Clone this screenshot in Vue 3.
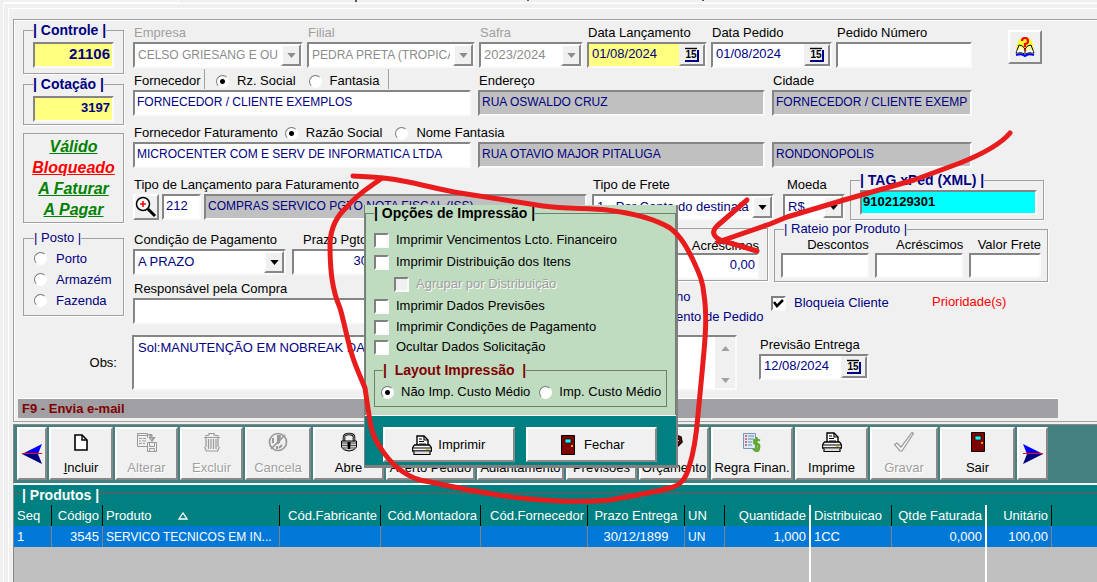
<script setup>
import { ref } from 'vue'

const posto = ref('')
const supplierName = ref('rz')
const billingName = ref('razao')
const layout = ref('nao')
const notes = ref('Sol:MANUTENÇÃO EM NOBREAK DA')

const statuses = [
  { text: 'Válido', tone: 'ok' },
  { text: 'Bloqueado', tone: 'bad' },
  { text: 'A Faturar', tone: 'ok' },
  { text: 'A Pagar', tone: 'ok' }
]

const postos = ['Porto', 'Armazém', 'Fazenda']
const rateio = ['Descontos', 'Acréscimos', 'Valor Frete']

const actions = [
  { text: 'Incluir', icon: 'page', key: true },
  { text: 'Alterar', icon: 'edit', off: true },
  { text: 'Excluir', icon: 'trash', off: true },
  { text: 'Cancela', icon: 'cancel', off: true },
  { text: 'Abre', icon: 'lock' },
  { text: 'Acerto Pedido', icon: '' },
  { text: 'Adiantamento', icon: '' },
  { text: 'Previsões', icon: '' },
  { text: 'Orçamento', icon: 'book' },
  { text: 'Regra Finan.', icon: 'rule' },
  { text: 'Imprime', icon: 'printer' },
  { text: 'Gravar', icon: 'check', off: true },
  { text: 'Sair', icon: 'door' }
]

const options = [
  { id: 'venc', text: 'Imprimir Vencimentos Lcto. Financeiro' },
  { id: 'dist', text: 'Imprimir Distribuição dos Itens' },
  { id: 'agr', text: 'Agrupar por Distribuição', off: true },
  { id: 'prev', text: 'Imprimir Dados Previsões' },
  { id: 'cond', text: 'Imprimir Condições de Pagamento' },
  { id: 'ocul', text: 'Ocultar Dados Solicitação' }
]

const columns = [
  { name: 'Seq', value: '1', cls: 'w-seq' },
  { name: 'Código', value: '3545', cls: 'w-cod right' },
  { name: 'Produto', value: 'SERVICO TECNICOS EM IN...', cls: 'w-prod caps', sorted: true },
  { name: 'Cód.Fabricante', value: '', cls: 'w-fab' },
  { name: 'Cód.Montadora', value: '', cls: 'w-mon' },
  { name: 'Cód.Fornecedor', value: '', cls: 'w-for' },
  { name: 'Prazo Entrega', value: '30/12/1899', cls: 'w-pra center' },
  { name: 'UN', value: 'UN', cls: 'w-un caps' },
  { name: 'Quantidade', value: '1,000', cls: 'w-qtd right split' },
  { name: 'Distribuicao', value: '1CC', cls: 'w-dis' },
  { name: 'Qtde Faturada', value: '0,000', cls: 'w-fat right split' },
  { name: 'Unitário', value: '100,00', cls: 'w-uni right' },
  { name: '', value: '', cls: 'w-rest' }
]
</script>

<template>
  <svg class="defs" aria-hidden="true">
    <symbol id="i-page" viewBox="0 0 20 20"><path d="M4 3h7l5 5v10H4z" fill="#fff" stroke="#000" stroke-width="1.6" /><path d="M11 3v5h5" fill="none" stroke="#000" stroke-width="1.4" /></symbol>
    <symbol id="i-edit" viewBox="0 0 20 20"><g fill="none" stroke="#999"><path d="M10 14.500H.5V1.500h10v4M.5 3.500h10M2 6.500h3M6 6.500h3M2 9h2M5 9h4M2 11.500h3M6 11.500h2" /><path d="M11 2.500h4v6m-3-3l3 4 3-4z" fill="#aaa" /><path d="M10.500 10.500h9v9h-9zM12.500 10.500v4h5v-4M12.500 19.500v-3h5v3" /></g></symbol>
    <symbol id="i-trash" viewBox="0 0 20 20"><g fill="none" stroke="#999" stroke-width="1.200"><path d="M2 5.500h16M3 4l4-1V1.500h5V3l5 1M4 6v9M16 6v9M2.500 15l2 4h11l2-4M6.500 7v10M9 7v10M11.500 7v10M14 7v10" /></g></symbol>
    <symbol id="i-cancel" viewBox="0 0 20 20"><g fill="none" stroke="#999" stroke-width="1.700"><circle cx="10" cy="10" r="8.500" /><path d="M3 17L17 3" /><path d="M10 3v9M9 14v3M12 3l-1 8M5 6v5M14 13l-3 3" stroke-width="2" /></g></symbol>
    <symbol id="i-lock" viewBox="0 0 20 20"><path d="M5 9V5q0-3 5-3t5 3v4" fill="none" stroke="#000" stroke-width="2.600" /><path d="M5 9V5q0-3 5-3t5 3v4" fill="none" stroke="#ccc" stroke-width=".8" /><path d="M2.500 9h15v6q-2 4-7.500 4t-7.500-4z" fill="#ccc" stroke="#000" /><path d="M3 11h14M3 13.500h14M4 16h12" stroke="#555" /><path d="M8.500 10h3v3l-.5 4H9l-.5-4z" fill="#000" /></symbol>
    <symbol id="i-book" viewBox="0 0 20 20"><path d="M1 9l11-6 5 2 1 5-8 8-8-4z" fill="#800000" stroke="#000" stroke-width="1.500" /><path d="M9 6l7 2-5 5" fill="#fff" stroke="#000" /></symbol>
    <symbol id="i-rule" viewBox="0 0 20 20"><path d="M1.500 1.500h12v15h-12z" fill="#dce9f7" stroke="#7998b8" /><path d="M3 4h2M3 7h2M3 10h2M3 13h2" stroke="#d34b4b" stroke-width="1.500" /><path d="M6 4h6M6 7h6M6 10h4M6 13h4" stroke="#6888aa" /><path d="M18 8.500q-6-2-6 1t3 2.500 2 4.500-6 .5M14.500 5v14" fill="none" stroke="#63a82e" stroke-width="2.300" /></symbol>
    <symbol id="i-printer" viewBox="0 0 20 20"><path d="M5 11V1h7l4 4v6" fill="#fff" stroke="#000" stroke-width="1.400" /><path d="M12 1v4h4M7 4h3M7 6.500h5M7 9h7" fill="none" stroke="#000" stroke-width="1.200" /><path d="M2.500 10h15l2 3v3H.5v-3z" fill="#f8f8f8" stroke="#000" stroke-width="1.300" /><path d="M1 13h18M2 16.500v3h16v-3" fill="#ddd" stroke="#000" stroke-width="1.200" /><path d="M14 14.500h3" stroke="#c8c800" /></symbol>
    <symbol id="i-check" viewBox="0 0 20 20"><path d="M.5 12.500L3 11l4 4L18 .500l1.500 1L8 19H6z" fill="#f4f4f4" stroke="#999" stroke-width="1.200" /></symbol>
    <symbol id="i-door" viewBox="0 0 20 20"><path d="M3.500.5h13v19h-13z" fill="#800000" stroke="#000" /><path d="M7 4h6v4H7z" fill="#0ff" stroke="#300" stroke-width=".8" /><path d="M14 10v2" stroke="#fd0" stroke-width="1.500" /></symbol>
    <symbol id="i-cal" viewBox="0 0 16 16"><path d="M1 1.500h12" stroke="#000" stroke-width="1.400" /><path d="M1 14h13V3" fill="none" stroke="#000080" stroke-width="2" /></symbol>
    <symbol id="i-down" viewBox="0 0 10 6"><path d="M0 0h10L5 6z" fill="currentColor" /></symbol>
  </svg>

  <div class="page">
    <svg class="tabline" aria-hidden="true"><path d="M4 2.500H178.500V0" fill="none" stroke="#fff" /><path d="M180 2.500H1097" stroke="#f8f8f8" /><path d="M356 0v2M528 0v1M703 0v1" stroke="#555" stroke-width="2" /></svg>
    <div class="outer">
      <div class="inner">
        <form class="form" @submit.prevent>
          <div class="columns">
            <aside class="side">
              <fieldset class="box key">
                <legend><label for="controle">| Controle |</label></legend>
                <input id="controle" class="field yellow big" value="21106">
              </fieldset>
              <fieldset class="box key second">
                <legend><label for="cotacao">| Cotação |</label></legend>
                <input id="cotacao" class="field yellow" value="3197">
              </fieldset>
              <div class="box statuses">
                <a v-for="s in statuses" :key="s.text" href="#" :class="s.tone">{{ s.text }}</a>
              </div>
              <fieldset class="box posto">
                <legend>| Posto |</legend>
                <label v-for="p in postos" :key="p"><input v-model="posto" type="radio" name="posto" :value="p">{{ p }}</label>
              </fieldset>
            </aside>

            <div class="main">
              <div class="row r1">
                <div class="cell off">
                  <label for="empresa">Empresa</label>
                  <div class="field combo caps"><select id="empresa" disabled><option>CELSO GRIESANG E OUTROS</option></select><span class="drop"><svg><use href="#i-down" /></svg></span></div>
                </div>
                <div class="cell off">
                  <label for="filial">Filial</label>
                  <div class="field combo caps"><select id="filial" disabled><option>PEDRA PRETA (TROPICAL)</option></select><span class="drop"><svg><use href="#i-down" /></svg></span></div>
                </div>
                <div class="cell off">
                  <label for="safra">Safra</label>
                  <div class="field combo"><select id="safra" disabled><option>2023/2024</option></select><span class="drop"><svg><use href="#i-down" /></svg></span></div>
                </div>
                <div class="cell">
                  <label for="lanc">Data Lançamento</label>
                  <div class="field combo yellow"><input id="lanc" value="01/08/2024"><button type="button" class="cal"><svg><use href="#i-cal" /></svg><span>15</span></button></div>
                </div>
                <div class="cell">
                  <label for="dped">Data Pedido</label>
                  <div class="field combo"><input id="dped" value="01/08/2024"><button type="button" class="cal"><svg><use href="#i-cal" /></svg><span>15</span></button></div>
                </div>
                <div class="cell">
                  <label for="num">Pedido Número</label>
                  <input id="num" class="field">
                </div>
                <div class="help-cell">
                  <button type="button" class="raised help">
                    <svg viewBox="0 0 20 20"><path d="M3 4L6 1h8l3 3 2 9H1z" fill="#ffff30" /><path d="M1 16l3-8q4 0 6 4 2-4 6-4l3 8q-6-1-9 1-3-2-9-1z" fill="#ffffa0" stroke="#000" /><path d="M2 15q5-3 8 1 3-4 8-1" fill="none" stroke="#fff" stroke-width="2" /><path d="M10 12v5" stroke="#000" /><path d="M1 18q6-2 9 1 3-3 9-1" fill="none" stroke="#00f" stroke-width="2" /><path d="M7 4q0-3 3-3t3 3-3 3v3M10 12v2" fill="none" stroke="#f00" stroke-width="2.200" /></svg>
                  </button>
                </div>
              </div>

              <div class="row r2">
                <div class="cell">
                  <div class="caption">
                    <label for="forn" class="forn">Fornecedor</label>
                    <div class="choices">
                      <label><input v-model="supplierName" type="radio" name="sn" value="rz">Rz. Social</label>
                      <label><input v-model="supplierName" type="radio" name="sn" value="fa">Fantasia</label>
                    </div>
                  </div>
                  <input id="forn" class="field caps" value="FORNECEDOR / CLIENTE EXEMPLOS">
                </div>
                <div class="cell">
                  <label id="l-end" for="end">Endereço</label>
                  <input id="end" class="field caps grey" readonly value="RUA OSWALDO CRUZ">
                </div>
                <div class="cell">
                  <label id="l-cid" for="cid">Cidade</label>
                  <input id="cid" class="field caps grey" readonly value="FORNECEDOR / CLIENTE EXEMPLOS">
                </div>
              </div>

              <div class="row r2">
                <div class="cell">
                  <div class="caption">
                    <label for="fat">Fornecedor Faturamento</label>
                    <div class="choices plain">
                      <label><input v-model="billingName" type="radio" name="bn" value="razao">Razão Social</label>
                      <label><input v-model="billingName" type="radio" name="bn" value="nome">Nome Fantasia</label>
                    </div>
                  </div>
                  <input id="fat" class="field caps" value="MICROCENTER COM E SERV DE INFORMATICA LTDA">
                </div>
                <div class="cell bottom"><input class="field caps grey" readonly aria-labelledby="l-end" value="RUA OTAVIO MAJOR PITALUGA"></div>
                <div class="cell bottom"><input class="field caps grey" readonly aria-labelledby="l-cid" value="RONDONOPOLIS"></div>
              </div>

              <div class="row r4">
                <div class="cell">
                  <label id="l-tipo" for="tipo">Tipo de Lançamento para Faturamento</label>
                  <div class="lookup">
                    <button type="button" class="raised search"><svg viewBox="0 0 22 22"><circle cx="8" cy="8" r="6.500" fill="#fff" stroke="#000" stroke-width="1.500" /><path d="M13 13l7 7" stroke="#000" stroke-width="3" /><path d="M8 5v6M5 8h6" stroke="#f00" stroke-width="1.600" /></svg></button>
                    <input id="tipo" class="field code" value="212">
                    <input class="field caps grey desc" readonly aria-labelledby="l-tipo" value="COMPRAS SERVICO PGTO NOTA FISCAL (ISS)">
                  </div>
                </div>
                <div class="cell">
                  <label for="frete">Tipo de Frete</label>
                  <div class="field combo"><select id="frete"><option>1 - Por Conta do destinatário</option></select><span class="drop"><svg><use href="#i-down" /></svg></span></div>
                </div>
                <div class="cell moeda">
                  <label for="moeda">Moeda</label>
                  <div class="field combo"><select id="moeda"><option>R$</option></select><span class="drop"><svg><use href="#i-down" /></svg></span></div>
                </div>
                <fieldset class="box tag">
                  <legend><label for="tag">| TAG xPed (XML) |</label></legend>
                  <input id="tag" class="field" value="9102129301">
                </fieldset>
              </div>

              <div class="row r5">
                <div class="cell">
                  <label for="cond-pg">Condição de Pagamento</label>
                  <div class="field combo"><select id="cond-pg"><option>A PRAZO</option></select><span class="drop"><svg><use href="#i-down" /></svg></span></div>
                </div>
                <div class="cell prazo">
                  <label for="prazo">Prazo Pgto</label>
                  <input id="prazo" class="field num" value="30">
                </div>
                <span></span>
                <div class="box totals">
                  <label for="acr">Acréscimos</label>
                  <input id="acr" class="field num" value="0,00">
                </div>
                <fieldset class="box rateio">
                  <legend>| Rateio por Produto |</legend>
                  <div v-for="(r, i) in rateio" :key="r">
                    <label :for="'rat' + i">{{ r }}</label>
                    <input :id="'rat' + i" class="field num">
                  </div>
                </fieldset>
              </div>

              <div class="row r6">
                <div class="cell">
                  <label for="resp">Responsável pela Compra</label>
                  <input id="resp" class="field">
                </div>
                <div class="flags"><span>no</span><span>ento de Pedido</span></div>
                <label class="lock-client"><input type="checkbox" checked>Bloqueia Cliente</label>
                <span class="priority">Prioridade(s)</span>
              </div>
            </div>
          </div>

          <div class="notes">
            <label for="obs">Obs:</label>
            <div class="field area">
              <textarea id="obs" v-model="notes"></textarea>
              <span class="scroll"><svg class="up"><use href="#i-down" /></svg><svg><use href="#i-down" /></svg></span>
            </div>
            <div class="cell">
              <label for="prev-ent">Previsão Entrega</label>
              <div class="field combo"><input id="prev-ent" value="12/08/2024"><button type="button" class="cal"><svg><use href="#i-cal" /></svg><span>15</span></button></div>
            </div>
          </div>

          <div class="hint">F9 - Envia e-mail</div>
        </form>

        <nav class="toolbar">
          <button type="button" class="raised"><svg class="arrow" viewBox="0 0 20 20"><path d="M20 0L0 10h16z" fill="#00f" /><path d="M20 20L0 10h16z" fill="#000080" /><path d="M0 9.500h20" stroke="#f00" /></svg></button>
          <button v-for="a in actions" :key="a.text" type="button" class="raised" :class="{ off: a.off }" :disabled="a.off">
            <svg><use v-if="a.icon" :href="'#i-' + a.icon" /></svg>
            <span v-if="a.key"><u>{{ a.text[0] }}</u>{{ a.text.slice(1) }}</span>
            <span v-else>{{ a.text }}</span>
          </button>
          <button type="button" class="raised"><svg class="arrow" viewBox="0 0 20 20"><path d="M0 0l20 10H4z" fill="#00f" /><path d="M0 20l20-10H4z" fill="#000080" /><path d="M0 9.500h20" stroke="#f00" /></svg></button>
        </nav>

        <section class="products">
          <h2>| Produtos |</h2>
          <table>
            <thead>
              <tr>
                <th v-for="c in columns" :key="c.name" :class="c.cls">{{ c.name }}<svg v-if="c.sorted" class="sort" viewBox="0 0 10 8"><path d="M5 1L1 7h8z" fill="none" stroke="#fff" stroke-width="1.300" /></svg></th>
              </tr>
            </thead>
            <tbody>
              <tr><td v-for="c in columns" :key="c.name" :class="c.cls">{{ c.value }}</td></tr>
              <tr class="blank"><td v-for="c in columns" :key="c.name" :class="c.cls"></td></tr>
            </tbody>
          </table>
        </section>
      </div>
    </div>

    <div class="dialog" role="dialog">
      <fieldset class="options">
        <legend>| Opções de Impressão |</legend>
        <label v-for="o in options" :key="o.id" :class="[o.id, { off: o.off }]"><input type="checkbox" :disabled="o.off">{{ o.text }}</label>
        <fieldset class="layout">
          <legend>|&nbsp; Layout Impressão &nbsp;|</legend>
          <label><input v-model="layout" type="radio" name="layout" value="nao">Não Imp. Custo Médio</label>
          <label><input v-model="layout" type="radio" name="layout" value="imp">Imp. Custo Médio</label>
        </fieldset>
      </fieldset>
      <div class="dialog-actions">
        <button type="button" class="raised"><svg><use href="#i-printer" /></svg>Imprimir</button>
        <button type="button" class="raised"><svg><use href="#i-door" /></svg>Fechar</button>
      </div>
    </div>

    <svg class="marker" viewBox="0 0 1097 582" aria-hidden="true">
      <path d="M353 176C370 177 385 177 403 181C425 185 440 190 460 193L543 206C565 209 590 208 607 210C632 213 655 219 670 228C682 237 688 250 693 260C700 275 703 282 704 295C708 320 704 350 702 373L698 415C696 440 694 452 689 467C685 481 680 485 670 488C650 493 632 496 610 500C580 503 550 501 520 498C485 494 450 486 420 480C400 474 388 460 380 447C372 436 370 425 369 415L365 388C361 378 357 370 353 358C347 340 345 325 340 308C332 290 330 270 330 243C331 225 340 213 347 207C357 194 370 187 382 178" />
      <path d="M1010 133C1000 145 980 155 960 163L914 180L844 200L787 217L770 224L718 242" />
      <path d="M747 200L717 226Q709 234 720 240L757 251" />
    </svg>
  </div>
</template>

<style>
body {
  margin: 0;
  background: #f0f0f0;
  overflow: hidden;
}
</style>

<style scoped>
* {
  box-sizing: border-box;
}
.defs {
  position: absolute;
  width: 0;
  height: 0;
}
.page {
  position: relative;
  min-height: 100vh;
  display: flex;
  flex-direction: column;
  overflow: hidden;
  background: #f0f0f0;
  color: #000;
  font: 13px/16px "Liberation Sans", Arial, sans-serif;
  white-space: nowrap;
}
input, select, textarea, button {
  font: inherit;
  color: inherit;
  margin: 0;
  border-radius: 0;
}
.tabline {
  display: block;
  width: 100%;
  height: 3px;
}
.outer {
  flex: 1;
  display: flex;
  margin-left: 3px;
  padding: 4px 0 0 4px;
  border-top: 1px solid #fff;
  border-left: 1px solid #fff;
}
.inner {
  flex: 1;
  min-width: 0;
  display: flex;
  flex-direction: column;
  padding: 10px 0 0 4px;
  border-top: 1px solid #fff;
  border-left: 1px solid #fff;
}
.form {
  border: 1px solid #a0a0a0;
  border-right: 0;
  box-shadow: inset 1px 1px 0 #fff;
  padding-bottom: 3px;
}
.columns {
  display: grid;
  grid-template-columns: 101px minmax(0, 1fr);
  gap: 9px;
  padding-left: 9px;
}

.box {
  min-width: 0;
  margin: 0;
  border: 1px solid #a0a0a0;
  box-shadow: 1px 1px 0 #fff;
}
.box legend {
  height: 16px;
  padding: 0;
  color: #000080;
}
.side {
  padding-top: 2px;
}
.key {
  padding: 4px 9px 5px;
}
.key legend, .tag legend {
  font-size: 14px;
  font-weight: bold;
}
.key .field {
  font-weight: bold;
  text-align: right;
}
.key .big {
  font-size: 15px;
}
.second {
  margin-top: 2px;
  padding-bottom: 2px;
}
.statuses {
  margin-top: 8px;
  padding: 2px 0;
  display: flex;
  flex-direction: column;
  align-items: center;
  font: italic bold 16px/21px "Liberation Sans", Arial, sans-serif;
}
.statuses .ok { color: #008000; }
.statuses .bad { color: #f00; }
.posto {
  margin-top: 7px;
  padding: 2px 0 4px 10px;
  color: #000080;
}
.posto label {
  display: flex;
  align-items: center;
  gap: 9px;
  height: 21px;
}

.field {
  display: block;
  width: 100%;
  height: 26px;
  padding: 0 2px 3px;
  border: 2px solid;
  border-color: #858585 #fafafa #fafafa #858585;
  background: #fff;
  color: #000080;
  outline: 0;
}
.caps { font-size: 12px; }
.num { text-align: right; }
.yellow { background: #ffff80; }
.grey { background: #c0c0c0; }
.combo {
  display: flex;
  padding: 0;
}
.combo select, .combo input {
  flex: 1;
  width: 0;
  min-width: 0;
  padding: 0 3px;
  border: 0;
  appearance: none;
  background: transparent;
  opacity: 1;
  outline: 0;
}
.combo input { padding-bottom: 2px; }
.drop {
  flex: none;
  display: grid;
  place-items: center;
  width: 20px;
  border: 2px solid;
  border-color: #fff #888 #888 #fff;
  background: #f0f0f0;
  color: #000;
}
.drop svg, .scroll svg {
  width: 9px;
  height: 5px;
}
.off, .off .combo, .off .drop { color: #8c8c8c; }
.cell.off > label { color: #a0a0a0; }
.cal {
  flex: none;
  position: relative;
  width: 26px;
  padding: 0;
  border: 2px solid;
  border-color: #f0f0f0 #888 #888 #f0f0f0;
  background: #f0f0f0;
  color: #000;
}
.cal svg {
  display: block;
  width: 16px;
  height: 16px;
  margin: 0 auto;
}
.cal span {
  position: absolute;
  inset: 1px 2px 0 0;
  font: bold 10px/16px "Liberation Sans", Arial, sans-serif;
}
.raised {
  padding: 0;
  border: 2px solid;
  border-color: #fff #888 #888 #fff;
  background: #f0f0f0;
}

.main {
  display: grid;
  grid-template-rows: 48px 52px 52px 55px 49px 43px;
  padding-top: 5px;
}
.row {
  display: grid;
  align-items: start;
}
.r1 { grid-template-columns: 170fr 168fr 104fr 120fr 121fr 136fr 121fr; gap: 4px; }
.r2 { grid-template-columns: 338fr 287fr 200fr 118fr; gap: 7px; }
.r4 { grid-template-columns: 454fr 182fr 66fr 194fr 48fr; gap: 5px; }
.r5 { grid-template-columns: 153fr 80fr 216fr 168fr 274fr 43fr; gap: 6px; }
.r6 { grid-template-columns: 537fr 89fr 155fr 165fr; gap: 6px; }
.cell {
  min-width: 0;
}
.cell > label {
  display: block;
  height: 17px;
  padding-left: 1px;
}
.bottom { padding-top: 17px; }
.moeda { padding-left: 4px; }
.moeda > label { padding-left: 4px; }
.prazo > label { padding-left: 11px; }
.help-cell { padding: 5px 0 0 32px; }
.help {
  display: grid;
  place-items: center;
  width: 34px;
  height: 34px;
}
.help svg {
  width: 20px;
  height: 20px;
}
.caption {
  display: flex;
  height: 17px;
  padding-left: 1px;
}
.choices {
  display: flex;
  gap: 13px;
  margin-top: -4px;
  height: 20px;
  padding: 4px 9px 0 11px;
  border: solid #a0a0a0;
  border-width: 0 1px;
}
.choices label {
  display: flex;
  align-items: center;
  gap: 8px;
}
.forn { width: 70px; }
.plain {
  gap: 13px;
  padding: 4px 7px 0;
  border: 0;
}
input[type="radio"] {
  appearance: none;
  flex: none;
  width: 13px;
  height: 13px;
  border: 1px solid;
  border-color: #777 #fff #fff #777;
  border-radius: 50%;
  background: #fff;
}
input[type="radio"]:checked {
  background: radial-gradient(circle, #000 0 2px, #fff 3px);
}
input[type="checkbox"] {
  appearance: none;
  flex: none;
  width: 15px;
  height: 15px;
  border: 2px solid;
  border-color: #808080 #fafafa #fafafa #808080;
  background: #fff;
}
input[type="checkbox"]:checked {
  background: #fff url("data:image/svg+xml,%3Csvg xmlns='http://www.w3.org/2000/svg' viewBox='0 0 11 11'%3E%3Cpath d='M1 4l3 4 6-6' fill='none' stroke='black' stroke-width='2.500'/%3E%3C/svg%3E");
}
.lookup {
  display: flex;
  gap: 3px;
}
.search {
  flex: none;
  width: 26px;
  height: 26px;
}
.search svg {
  display: block;
  width: 22px;
  height: 22px;
}
.lookup .code { width: 39px; flex: none; }
.lookup .desc { flex: 1; min-width: 0; }
.tag {
  margin-top: -5px;
  padding: 2px 6px 4px 9px;
}
.tag .field {
  height: 25px;
  padding: 0 1px 2px;
  background: #0ff;
  color: #000;
  font-weight: bold;
}
.totals {
  margin-top: -4px;
  height: 53px;
  padding: 9px 8px 0;
  text-align: right;
}
.totals label {
  display: block;
  height: 15px;
}
.rateio {
  display: grid;
  grid-template-columns: 88fr 89fr 72fr;
  gap: 6px;
  margin-top: -11px;
  padding: 0 6px 3px;
}
.rateio legend { margin-left: 3px; }
.rateio div { min-width: 0; }
.rateio label {
  display: block;
  height: 16px;
  text-align: right;
}
.rateio .field { height: 25px; }
.flags {
  display: grid;
  grid-auto-rows: 20px;
  align-items: center;
  padding-top: 6px;
  color: #000080;
}
.lock-client {
  display: flex;
  align-items: center;
  gap: 8px;
  padding-top: 14px;
  color: #000080;
}
.priority {
  padding-top: 13px;
  color: #f00;
}
.notes {
  display: grid;
  grid-template-columns: 94px 620fr 110fr 250fr;
  align-items: start;
  margin-top: 11px;
  padding-left: 9px;
}
.notes > label {
  padding-top: 20px;
  text-align: right;
}
.notes .area {
  display: flex;
  height: 55px;
  margin-left: 15px;
  width: auto;
  padding: 0;
}
.area textarea {
  flex: 1;
  min-width: 0;
  border: 0;
  padding: 3px 4px;
  resize: none;
  overflow: hidden;
  outline: 0;
  background: transparent;
}
.scroll {
  display: flex;
  flex-direction: column;
  justify-content: space-between;
  align-items: center;
  width: 20px;
  padding: 9px 0 5px;
  background: #f0f0f0;
  color: #a0a0a0;
}
.scroll .up { transform: rotate(180deg); }
.notes .cell {
  margin-left: 22px;
  margin-right: -22px;
  padding-top: 2px;
}
.hint {
  width: 96%;
  height: 20px;
  margin: 8px 0 0 4px;
  padding-left: 4px;
  border-top: 1px solid #fff;
  background: #a09fa4;
  color: #800000;
  font-weight: bold;
  line-height: 20px;
}

.toolbar {
  display: grid;
  grid-template-columns: 30fr 64fr 63fr 63fr 66fr 71fr 89fr 87fr 71fr 70fr 82fr 73fr 68fr 75fr 31fr;
  gap: 2px;
  margin-top: 2px;
  padding: 2px 49px 3px 3px;
  border: 1px solid #888;
  border-right: 0;
  border-bottom: 2px solid #fff;
  background: #44807f;
}
.toolbar button {
  display: flex;
  flex-direction: column;
  align-items: center;
  justify-content: space-between;
  min-width: 0;
  height: 53px;
  padding: 3px 0 2px;
}
.toolbar svg {
  flex: none;
  width: 20px;
  height: 20px;
}
.toolbar .arrow { margin: auto; }
.toolbar .off {
  color: #a0a0a0;
  text-shadow: 1px 1px 0 #fff;
}

.products {
  flex: 1;
  background: #c0c0c0;
  border-left: 1px solid #888;
}
.products h2 {
  display: flex;
  height: 20px;
  margin: 0;
  background: #008080;
  color: #fff;
  font: bold 14px/20px "Liberation Sans", Arial, sans-serif;
}
.products h2::before, .products h2::after {
  content: "";
  width: 8px;
  height: 1px;
  margin-top: 8px;
  background: #805050;
}
.products h2::after { flex: 1; }
table {
  width: 100%;
  table-layout: fixed;
  border-collapse: separate;
  border-spacing: 0;
  color: #fff;
}
th, td {
  height: 21px;
  padding: 0 3px;
  border-right: 1px solid #808080;
  text-align: left;
  font-weight: normal;
  overflow: hidden;
}
th {
  background: #008080;
  border-color: #000;
}
td { background: #0078d7; }
th.caps { font-size: 13px; }
th.w-rest, td.w-rest { border: 0; }
.blank td {
  height: 40px;
  border-color: transparent;
  background: #c0c0c0;
}
th.split, td.split, .blank td.split { border-right: 2px solid #fff; }
.right { text-align: right; }
.center { text-align: center; }
.w-seq { width: 38px; }
.w-cod { width: 51px; }
.w-prod { width: 177px; }
.w-fab { width: 101px; }
.w-mon { width: 100px; }
.w-for { width: 107px; }
.w-pra { width: 97px; }
.w-un { width: 40px; }
.w-qtd { width: 86px; }
.w-dis { width: 81px; }
.w-fat { width: 95px; }
.w-uni { width: 65px; }
th.w-fab, th.w-mon, th.w-for { text-align: right; }
.sort {
  width: 10px;
  height: 8px;
  margin-left: 26px;
}

.dialog {
  position: absolute;
  left: 364px;
  top: 205px;
  width: 314px;
  background: #c0dcc0;
  border-right: 2px solid #808080;
  border-bottom: 3px solid #808080;
  border-left: 1px solid #808080;
}
.options {
  min-width: 0;
  margin: 0;
  padding: 8px;
  border: 1px solid #708070;
  border-bottom: 0;
}
.options legend {
  height: 16px;
  padding: 0;
  font-size: 14px;
  font-weight: bold;
}
.options label {
  display: flex;
  align-items: center;
  gap: 7px;
  height: 20px;
}
.options .venc, .options .dist, .options .agr, .options .prev { height: 22px; }
.options .agr { margin-left: 20px; }
.options .off {
  color: #a0a0a0;
  text-shadow: 1px 1px 0 #fff;
}
.options .off input { background: #f0f0f0; }
.options .layout {
  display: flex;
  gap: 9px;
  min-width: 0;
  margin: 5px 0 0;
  padding: 4px 6px;
  border: 1px solid #708070;
}
.options .layout legend {
  margin-left: 2px;
  color: #800000;
}
.dialog-actions {
  display: grid;
  grid-template-columns: 1fr 1fr;
  gap: 11px;
  padding: 11px 19px 3px 18px;
  border-top: 1px solid #fff;
  background: #008080;
}
.dialog-actions button {
  display: flex;
  align-items: center;
  justify-content: center;
  gap: 6px;
  height: 35px;
}
.dialog-actions svg {
  width: 20px;
  height: 20px;
}
.marker {
  position: absolute;
  left: 0;
  top: 0;
  width: 1097px;
  height: 582px;
  pointer-events: none;
}
.marker path {
  fill: none;
  stroke: #e81c1c;
  stroke-width: 5;
  stroke-linecap: round;
  stroke-linejoin: round;
}
</style>
